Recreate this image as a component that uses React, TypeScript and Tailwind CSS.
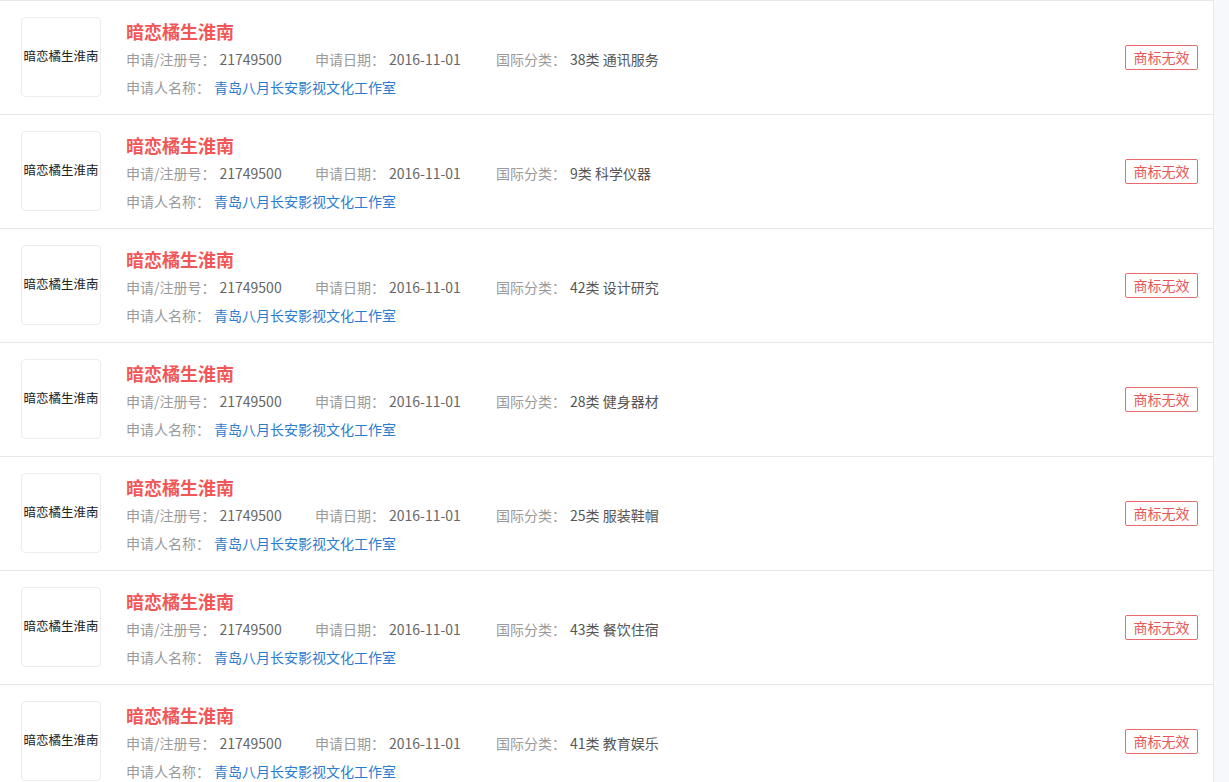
import React from "react";

const items = [
  "38类 通讯服务",
  "9类 科学仪器",
  "42类 设计研究",
  "28类 健身器材",
  "25类 服装鞋帽",
  "43类 餐饮住宿",
  "41类 教育娱乐",
];

const font = { fontFamily: '"Microsoft YaHei", "Noto Sans CJK SC", sans-serif' };

function Row({ cls }: { cls: string }) {
  return (
    <div className="flex h-[114px] items-start border-t border-[#e8e8e8] pl-[21px] pr-[15px] pt-4">
      <div className="flex h-20 w-20 shrink-0 items-center justify-center rounded-[4px] border border-[#ececec] bg-white text-[12.5px] text-[#222] [font-family:'Liberation_Serif','Noto_Sans_CJK_SC',serif]">
        暗恋橘生淮南
      </div>
      <div className="ml-[25px] flex flex-1 flex-col">
        <div className="text-[18px] font-bold leading-[28px] text-[#f25757]">暗恋橘生淮南</div>
        <div className="flex text-[14px] leading-[28px]">
          <span className="w-[189px] shrink-0">
            <span className="text-[#9a9a9a]">申请/注册号：</span>
            <span className="ml-1 text-[#666]">21749500</span>
          </span>
          <span className="w-[181px] shrink-0">
            <span className="text-[#9a9a9a]">申请日期：</span>
            <span className="ml-1 text-[#666]">2016-11-01</span>
          </span>
          <span>
            <span className="text-[#9a9a9a]">国际分类：</span>
            <span className="ml-1 text-[#555]">{cls}</span>
          </span>
        </div>
        <div className="text-[14px] leading-[28px]">
          <span className="text-[#9a9a9a]">申请人名称：</span>
          <span className="ml-1 text-[#2a7ccf]">青岛八月长安影视文化工作室</span>
        </div>
      </div>
      <div className="flex h-[80px] items-center">
        <span className="flex h-[25px] w-[73px] items-center justify-center rounded-[2px] border border-[#e86a6a] text-[14px] text-[#e85656]">
          商标无效
        </span>
      </div>
    </div>
  );
}

export default function App() {
  return (
    <div className="flex h-[782px] w-[1229px] overflow-hidden bg-white" style={font}>
      <div className="w-[1214px] shrink-0 border-r border-[#e8e8e8]">
        {items.map((c, i) => (
          <Row key={i} cls={c} />
        ))}
      </div>
      <div className="flex-1 bg-[#f6f8fb]" />
    </div>
  );
}
